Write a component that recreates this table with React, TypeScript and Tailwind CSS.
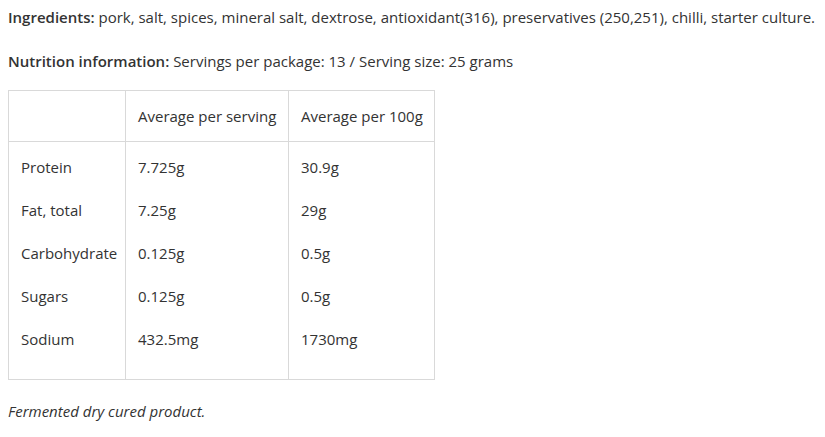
import React from 'react';

const rows = [
  { label: 'Protein', serving: '7.725g', per100: '30.9g' },
  { label: 'Fat, total', serving: '7.25g', per100: '29g' },
  { label: 'Carbohydrate', serving: '0.125g', per100: '0.5g' },
  { label: 'Sugars', serving: '0.125g', per100: '0.5g' },
  { label: 'Sodium', serving: '432.5mg', per100: '1730mg' },
];

const App: React.FC = () => {
  return (
    <div className="px-2 pt-[7px] text-[15px] leading-[20px] text-[#333333] bg-white font-['Open_Sans',sans-serif]">
      <p className="whitespace-nowrap">
        <span className="font-semibold">Ingredients:</span> pork, salt, spices, mineral salt, dextrose, antioxidant(316), preservatives (250,251), chilli, starter culture.
      </p>
      <p className="mt-[24px]">
        <span className="font-semibold">Nutrition information:</span> Servings per package: 13 / Serving size: 25 grams
      </p>

      <table className="mt-[19px] w-[426px] table-fixed border-collapse border border-[#d9d9d9]">
        <colgroup>
          <col className="w-[117px]" />
          <col className="w-[163px]" />
          <col className="w-[146px]" />
        </colgroup>
        <thead>
          <tr className="border-b border-[#d9d9d9]">
            <th className="border-r border-[#d9d9d9]" />
            <th className="h-[51px] px-3 text-left font-normal whitespace-nowrap border-r border-[#d9d9d9]">Average per serving</th>
            <th className="px-3 text-left font-normal whitespace-nowrap">Average per 100g</th>
          </tr>
        </thead>
        <tbody className="leading-[19px]">
          {rows.map((r, i) => {
            const pad = i === 0 ? 'pt-[16px] pb-[12px]' : i === rows.length - 1 ? 'pt-[12px] pb-[30px]' : 'py-[12px]';
            return (
              <tr key={r.label}>
                <td className={`pl-3 pr-1 ${pad} whitespace-nowrap border-r border-[#d9d9d9]`}>{r.label}</td>
                <td className={`px-3 ${pad} border-r border-[#d9d9d9]`}>{r.serving}</td>
                <td className={`px-3 ${pad}`}>{r.per100}</td>
              </tr>
            );
          })}
        </tbody>
      </table>

      <p className="mt-[21px] italic">Fermented dry cured product.</p>
    </div>
  );
};

export default App;
